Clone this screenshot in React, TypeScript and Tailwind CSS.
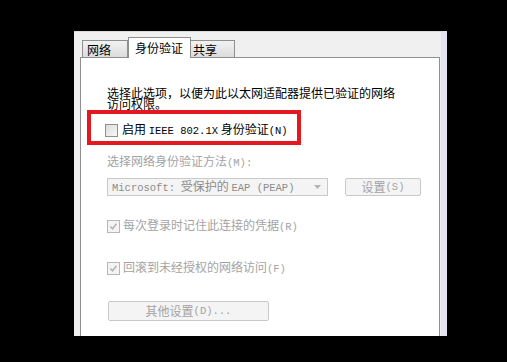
import React from "react";

const cjk = "font-['SimSun','Noto_Sans_CJK_SC',sans-serif]";
const mono = "font-['Liberation_Mono','Noto_Sans_CJK_SC',monospace] text-[10.5px]";

function Check({ checked, disabled }: { checked?: boolean; disabled?: boolean }) {
  return (
    <div
      className={`w-[13px] h-[13px] border ${disabled ? "border-[#b8b8b8] bg-[#f4f4f4]" : "border-[#8f8f8f] bg-[linear-gradient(135deg,#dcdcdc,#f8f8f8)]"} flex items-center justify-center shrink-0`}
    >
      {checked && (
        <svg width="9" height="9" viewBox="0 0 9 9">
          <path d="M1.5 4.5 L3.5 6.8 L7.5 1.8" fill="none" stroke="#b0b0b0" strokeWidth="1.4" />
        </svg>
      )}
    </div>
  );
}

export default function App() {
  return (
    <div className={`w-[507px] h-[362px] bg-black overflow-hidden pl-[74px] pt-[31px] ${cjk}`}>
      {/* dialog window */}
      <div className="relative w-[373px] h-[305px] bg-[#f0f0f0] border-t border-[#dcdcdc] border-r-[6px] border-r-[#e4e4f2] pl-[6px] pt-[5px] flex flex-col">
        {/* tabs */}
        <div className="flex items-end h-[20px] text-[12px] leading-none text-black">
          <div className="ml-[2px] w-[46px] h-[17px] border border-b-0 border-[#8e8f8f] bg-[linear-gradient(#f2f2f2,#dcdcdc)] pl-[4px] pt-[3px]">网络</div>
          <div className="w-[63px] h-[21px] -mb-px z-10 border border-b-0 border-[#8e8f8f] bg-white pl-[6px] pt-[4px]">身份验证</div>
          <div className="w-[44px] h-[17px] border border-b-0 border-l-0 border-[#8e8f8f] bg-[linear-gradient(#f2f2f2,#dcdcdc)] pl-[2px] pt-[3px]">共享</div>
        </div>

        {/* panel */}
        <div className="w-[360px] flex-1 bg-white border border-b-0 border-[#8e8f8f] pl-[26px] text-[12px] text-black">
          <p className="mt-[29px] leading-[11px] w-[290px]">
            选择此选项，以便为此以太网适配器提供已验证的网络访问权限。
          </p>

          <div className="mt-[13px] -ml-[2px] h-[16px] flex items-center gap-[4px]">
            <Check />
            <span className="leading-none whitespace-nowrap">
              启用 <span className={mono}>IEEE 802.1X</span> 身份验证<span className={mono}>(N)</span>
            </span>
          </div>

          <div className="mt-[17px] h-[13px] leading-none text-[#a3a3a3]">
            选择网络身份验证方法<span className={mono}>(M):</span>
          </div>

          <div className="mt-[10px] flex items-center gap-[17px]">
            <div className="w-[221px] h-[18px] border border-[#c9c9c9] bg-[#f4f4f4] flex items-center pl-[4px] pr-[6px] text-[#8c8c8c]">
              <span className="flex-1 leading-none whitespace-nowrap">
                <span className={mono}>Microsoft:</span> <span className="ml-[3px]">受保护的</span> <span className={mono}>EAP (PEAP)</span>
              </span>
              <svg width="7" height="4" viewBox="0 0 7 4">
                <path d="M0 0 H7 L3.5 4 Z" fill="#b4b4b4" />
              </svg>
            </div>
            <div className="w-[76px] h-[18px] border border-[#c9c9c9] bg-[#f4f4f4] rounded-[2px] flex items-center justify-center text-[#a3a3a3] leading-none">
              设置<span className={mono}>(S)</span>
            </div>
          </div>

          <div className="mt-[22px] h-[16px] flex items-center gap-[3px] text-[#a3a3a3]">
            <Check checked disabled />
            <span className="leading-none">
              每次登录时记住此连接的凭据<span className={mono}>(R)</span>
            </span>
          </div>

          <div className="mt-[26px] h-[16px] flex items-center gap-[3px] text-[#a3a3a3]">
            <Check checked disabled />
            <span className="leading-none">
              回滚到未经授权的网络访问<span className={mono}>(F)</span>
            </span>
          </div>

          <div className="mt-[25px] ml-[1px] w-[161px] h-[20px] border border-[#c9c9c9] bg-[#f4f4f4] rounded-[2px] flex items-center justify-center text-[#a3a3a3] leading-none">
            其他设置<span className={mono}>(D)...</span>
          </div>
        </div>

        {/* red annotation box */}
        <div className="absolute left-[13px] top-[78px] w-[214px] h-[35px] border-[4px] border-[#e3191f]" />
      </div>
    </div>
  );
}
